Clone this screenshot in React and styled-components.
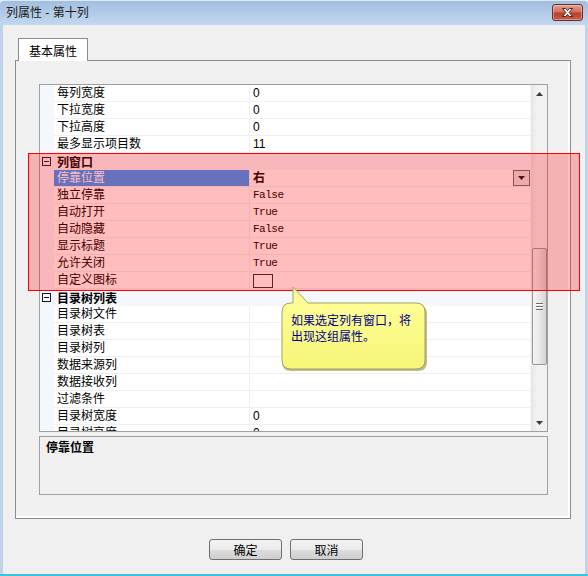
import React from 'react'
import styled, { createGlobalStyle } from 'styled-components'

const GlobalStyle = createGlobalStyle`
  html, body {
    margin: 0;
    padding: 0;
    background: #ffffff;
    overflow: hidden;
  }
  * { box-sizing: border-box; }
`

const FONT = `"Liberation Sans", "Noto Sans CJK SC", sans-serif`

const Window = styled.div`
  position: relative;
  width: 588px;
  height: 576px;
  display: flex;
  flex-direction: column;
  background: #f0f0f0;
  font-family: ${FONT};
  font-size: 12px;
  color: #000;
  border-bottom: 2px solid #3cc4e6;
`

const TitleBar = styled.div`
  height: 25px;
  flex: none;
  display: flex;
  align-items: center;
  justify-content: space-between;
  padding: 0 5px 0 6px;
  background: linear-gradient(to bottom, #a2bee0, #c3d8ef);
  border-top: 1px solid #dfe9f5;
  border-radius: 4px 4px 0 0;
`

const Title = styled.span`
  color: #1c1c1c;
  font-size: 12px;
  line-height: 16px;
`

const CloseButton = styled.div`
  width: 31px;
  height: 17px;
  margin-top: -2px;
  display: flex;
  align-items: center;
  justify-content: center;
  border: 1px solid #6e2a26;
  border-radius: 3px;
  background: linear-gradient(to bottom, #e0a397 0%, #cf6f61 45%, #b8412f 55%, #c85c48 100%);
  box-shadow: inset 0 0 0 1px rgba(255, 220, 210, 0.45);
`

const Frame = styled.div`
  flex: 1;
  display: flex;
  flex-direction: column;
  border-left: 3px solid #bcd3ec;
  border-right: 3px solid #bcd3ec;
  padding: 13px 14px 0 12px;
`

const TabStrip = styled.div`
  display: flex;
  padding-left: 3px;
  height: 22px;
`

const Tab = styled.div`
  position: relative;
  z-index: 1;
  height: 23px;
  padding: 0 10px;
  display: flex;
  align-items: center;
  background: #ffffff;
  border: 1px solid #898c95;
  border-bottom: none;
  font-size: 12px;
`

const TabPanel = styled.div`
  height: 459px;
  display: flex;
  flex-direction: column;
  gap: 4px;
  padding: 23px 22px 22px 23px;
  border: 1px solid #898c95;
  box-shadow: inset -2px -2px 0 #ffffff;
`

const Grid = styled.div`
  height: 348px;
  display: flex;
  border: 1px solid #a0a0a0;
  background: #ffffff;
`

const RowList = styled.div`
  flex: 1;
  overflow: hidden;
  display: flex;
  flex-direction: column;
`

const Row = styled.div`
  flex: none;
  height: 17px;
  display: grid;
  grid-template-columns: 14px 196px 1fr;
  background: #f4f7fc;
`

const Label = styled.div`
  height: 17px;
  line-height: 16px;
  padding-left: 3px;
  border-right: 1px solid #f0f0f0;
  border-bottom: 1px solid #f0f0f0;
  background: ${p => (p.$selected ? '#3399ff' : '#ffffff')};
  color: ${p => (p.$selected ? '#ffffff' : '#000000')};
  white-space: nowrap;
`

const Value = styled.div`
  height: 17px;
  display: flex;
  align-items: center;
  justify-content: space-between;
  padding-left: 3px;
  border-bottom: 1px solid #f0f0f0;
  background: #ffffff;
  font-family: ${p => (p.$mono ? `"Liberation Mono", monospace` : FONT)};
  font-size: ${p => (p.$mono ? '11px' : '12px')};
  letter-spacing: ${p => (p.$mono ? '-0.5px' : '0')};
  font-weight: ${p => (p.$bold ? 'bold' : 'normal')};
  line-height: 16px;
`

const CategoryRow = styled.div`
  flex: none;
  height: 17px;
  display: flex;
  align-items: center;
  padding-left: 2px;
  background: #f4f7fc;
  font-weight: bold;
`

const Toggle = styled.span`
  position: relative;
  width: 9px;
  height: 9px;
  margin-right: 6px;
  border: 1px solid #1a1a1a;
  &::after {
    content: '';
    position: absolute;
    left: 1px;
    top: 3px;
    width: 5px;
    height: 1px;
    background: #1a1a1a;
  }
`

const DropButton = styled.div`
  width: 17px;
  height: 16px;
  display: flex;
  align-items: center;
  justify-content: center;
  border: 1px solid #6c6c6c;
  background: #e6e6e6;
`

const Swatch = styled.span`
  width: 20px;
  height: 14px;
  margin-top: 1px;
  border: 1px solid #2a2a2a;
  background: #ffffff;
`

const ScrollBar = styled.div`
  width: 17px;
  flex: none;
  display: flex;
  flex-direction: column;
  background: linear-gradient(to right, #e6e6e6, #f3f3f3 40%, #f0f0f0);
  border-left: 1px solid #f6f6f6;
`

const ArrowButton = styled.div`
  height: 17px;
  flex: none;
  display: flex;
  align-items: center;
  justify-content: center;
`

const Track = styled.div`
  flex: 1;
  display: flex;
  flex-direction: column;
  align-items: center;
`

const Thumb = styled.div`
  width: 15px;
  height: 117px;
  display: flex;
  align-items: center;
  justify-content: center;
  border: 1px solid #979797;
  border-radius: 2px;
  background: linear-gradient(to right, #f4f4f4, #e8e8e8 50%, #d4d4d4);
`

const Grip = styled.div`
  width: 7px;
  height: 7px;
  background: repeating-linear-gradient(to bottom, #6f6f6f 0 1px, #ffffff 1px 2px, transparent 2px 3px);
`

const Description = styled.div`
  height: 59px;
  padding: 3px 6px;
  border: 1px solid #a0a0a0;
  background: #f0f0f0;
  font-weight: bold;
  line-height: 16px;
`

const ButtonRow = styled.div`
  display: flex;
  justify-content: center;
  gap: 8px;
  margin-top: 20px;
  padding-right: 14px;
`

const Button = styled.button`
  width: 73px;
  height: 21px;
  padding: 0;
  border: 1px solid #707070;
  border-radius: 3px;
  background: linear-gradient(to bottom, #f2f2f2 0%, #ebebeb 50%, #dddddd 51%, #cfcfcf 100%);
  font-family: ${FONT};
  font-size: 12px;
  color: #000;
`

const Highlight = styled.div`
  position: absolute;
  left: 28px;
  top: 153px;
  width: 552px;
  height: 138px;
  border: 1px solid #ff0000;
  background: rgba(255, 0, 0, 0.26);
  pointer-events: none;
`

const Callout = styled.div`
  position: absolute;
  left: 280px;
  top: 285px;
  width: 152px;
  height: 92px;
`

const CalloutText = styled.div`
  position: absolute;
  left: 11px;
  top: 28px;
  color: #00008c;
  font-size: 12px;
  line-height: 16px;
`

const rows = [
  { label: '每列宽度', value: '0' },
  { label: '下拉宽度', value: '0' },
  { label: '下拉高度', value: '0' },
  { label: '最多显示项目数', value: '11' },
  { cat: '列窗口' },
  { label: '停靠位置', value: '右', selected: true },
  { label: '独立停靠', value: 'False', mono: true },
  { label: '自动打开', value: 'True', mono: true },
  { label: '自动隐藏', value: 'False', mono: true },
  { label: '显示标题', value: 'True', mono: true },
  { label: '允许关闭', value: 'True', mono: true },
  { label: '自定义图标', swatch: true },
  { cat: '目录树列表' },
  { label: '目录树文件' },
  { label: '目录树表' },
  { label: '目录树列' },
  { label: '数据来源列' },
  { label: '数据接收列' },
  { label: '过滤条件' },
  { label: '目录树宽度', value: '0' },
  { label: '目录树高度', value: '0' },
]

const PropertyRow = ({ row }) => {
  if (row.cat) {
    return (
      <CategoryRow>
        <Toggle />
        {row.cat}
      </CategoryRow>
    )
  }
  return (
    <Row>
      <span />
      <Label $selected={row.selected}>{row.label}</Label>
      <Value $mono={row.mono} $bold={row.selected}>
        {row.swatch ? <Swatch /> : row.value}
        {row.selected && (
          <DropButton>
            <svg width="7" height="4" viewBox="0 0 7 4">
              <path d="M0 0h7L3.5 4z" fill="#1a1a1a" />
            </svg>
          </DropButton>
        )}
      </Value>
    </Row>
  )
}

const App = () => {
  return (
    <Window>
      <GlobalStyle />
      <TitleBar>
        <Title>列属性 - 第十列</Title>
        <CloseButton>
          <svg width="13" height="11" viewBox="0 0 13 11">
            <path
              d="M1.5 1.5h3l2 2.2 2-2.2h3l-3.4 4 3.4 4h-3l-2-2.2-2 2.2h-3l3.4-4z"
              fill="#ffffff"
              stroke="#5a2420"
              strokeWidth="1"
              strokeLinejoin="round"
            />
          </svg>
        </CloseButton>
      </TitleBar>

      <Frame>
        <TabStrip>
          <Tab>基本属性</Tab>
        </TabStrip>
        <TabPanel>
          <Grid>
            <RowList>
              {rows.map((row, i) => (
                <PropertyRow key={i} row={row} />
              ))}
            </RowList>
            <ScrollBar>
              <ArrowButton>
                <svg width="7" height="4" viewBox="0 0 7 4">
                  <path d="M0 4h7L3.5 0z" fill="#3c3c3c" />
                </svg>
              </ArrowButton>
              <Track>
                <Thumb style={{ marginTop: 146 }}>
                  <Grip />
                </Thumb>
              </Track>
              <ArrowButton>
                <svg width="7" height="4" viewBox="0 0 7 4">
                  <path d="M0 0h7L3.5 4z" fill="#3c3c3c" />
                </svg>
              </ArrowButton>
            </ScrollBar>
          </Grid>
          <Description>停靠位置</Description>
        </TabPanel>

        <ButtonRow>
          <Button>确定</Button>
          <Button>取消</Button>
        </ButtonRow>
      </Frame>

      <Highlight />

      <Callout>
        <svg width="152" height="92" viewBox="0 0 152 92">
          <defs>
            <linearGradient id="tipFill" x1="0" y1="0" x2="0" y2="1">
              <stop offset="0" stopColor="#ffff9c" />
              <stop offset="1" stopColor="#f6f677" />
            </linearGradient>
          </defs>
          <path
            d="M11 20 L13 20 L13 4 L28 20 L138 20 Q147 20 147 29 L147 77 Q147 86 138 86 L11 86 Q2 86 2 77 L2 29 Q2 20 11 20 Z"
            fill="#8d8d55"
            opacity="0.6"
          />
          <path
            d="M11 18 L13 18 L13 2 L28 18 L136 18 Q145 18 145 27 L145 75 Q145 84 136 84 L11 84 Q2 84 2 75 L2 27 Q2 18 11 18 Z"
            fill="url(#tipFill)"
            stroke="#a3a35c"
            strokeWidth="1"
          />
        </svg>
        <CalloutText>
          如果选定列有窗口，将
          <br />
          出现这组属性。
        </CalloutText>
      </Callout>
    </Window>
  )
}

export default App
